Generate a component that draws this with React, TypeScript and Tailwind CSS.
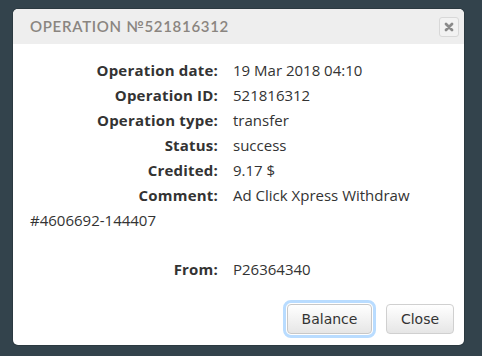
import React from "react";

const rows: [string, string][] = [
  ["Operation date:", "19 Mar 2018 04:10"],
  ["Operation ID:", "521816312"],
  ["Operation type:", "transfer"],
  ["Status:", "success"],
  ["Credited:", "9.17 $"],
];

function Label({ children }: { children: React.ReactNode }) {
  return (
    <span className="inline-block w-[188px] mr-[15px] text-right font-bold text-[#333] tracking-[0.2px]">
      {children}
    </span>
  );
}

export default function App() {
  return (
    <div className="w-[482px] h-[356px] bg-[#33434c] pt-[9px] pl-[13px] overflow-hidden">
      <div className="w-[451px] h-[336px] bg-white rounded-[5px] overflow-hidden flex flex-col shadow-[0_0_0_1px_rgba(0,0,0,0.15)]">
        <div className="h-[35px] bg-[#eeeeee] flex items-center pl-[17px] pr-[5px] shrink-0">
          <div
            className="flex-1 text-[15px] tracking-[0.7px] text-[#8a8580] font-semibold"
            style={{ fontFamily: "Lato, 'Open Sans', sans-serif" }}
          >
            OPERATION №521816312
          </div>
          <div className="w-[20px] h-[20px] border border-[#d8d8d8] rounded-[3px] bg-[#f2f2f2] flex items-center justify-center">
            <svg width="10" height="10" viewBox="0 0 10 10">
              <path d="M2 2 L8 8 M8 2 L2 8" stroke="#8a8a8a" strokeWidth="2.8" strokeLinecap="round" />
            </svg>
          </div>
        </div>
        <div
          className="flex-1 pt-[14px] pl-[17px] pr-[12px] text-[15px] leading-[25px] text-[#333]"
          style={{ fontFamily: "'Open Sans', 'Noto Sans', sans-serif" }}
        >
          {rows.map(([l, v]) => (
            <div key={l}>
              <Label>{l}</Label>
              <span>{v}</span>
            </div>
          ))}
          <div>
            <Label>Comment:</Label>
            <span>Ad Click Xpress Withdraw #4606692-144407</span>
          </div>
          <div className="h-[24px]" />
          <div>
            <Label>From:</Label>
            <span>P26364340</span>
          </div>
        </div>
        <div
          className="flex justify-end gap-[14px] pr-[10px] pb-[11px] shrink-0"
          style={{ fontFamily: "'DejaVu Sans', Verdana, sans-serif" }}
        >
          <button className="h-[30px] w-[85px] rounded-[4px] border border-[#c8c8c8] bg-gradient-to-b from-white to-[#e6e6e6] text-[14px] text-[#333] outline-[3px] outline-solid outline-[#b9dcff] outline-offset-[1px]">
            Balance
          </button>
          <button className="h-[30px] w-[68px] rounded-[4px] border border-[#d0d0d0] bg-gradient-to-b from-white to-[#e6e6e6] text-[14px] text-[#333]">
            Close
          </button>
        </div>
      </div>
    </div>
  );
}
